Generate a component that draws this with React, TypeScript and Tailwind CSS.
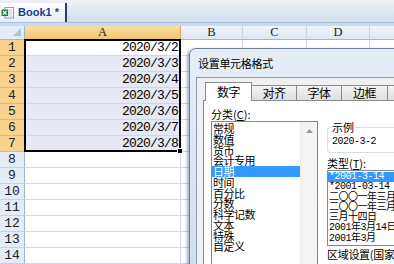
import React from 'react';

const cols = [
  { label: 'A', w: 'w-[156px]' },
  { label: 'B', w: 'w-[62px]' },
  { label: 'C', w: 'w-[64px]' },
  { label: 'D', w: 'w-[63px]' },
  { label: 'E', w: 'w-[60px]' },
];

const rows = [1, 2, 3, 4, 5, 6, 7, 8, 9, 10, 11, 12, 13, 14];

const categories = ['常规', '数值', '货币', '会计专用', '日期', '时间', '百分比', '分数', '科学记数', '文本', '特殊', '自定义'];

const types = ['*2001-3-14', '*2001-03-14', '二〇〇一年三月十四日', '二〇〇一年三月', '三月十四日', '2001年3月14日', '2001年3月'];

const tabs = [
  { label: '数字', w: 'w-[47px]' },
  { label: '对齐', w: 'w-[46px]' },
  { label: '字体', w: 'w-[46px]' },
  { label: '边框', w: 'w-[47px]' },
  { label: '图案', w: 'w-[46px]' },
];

const ExcelIcon = () => (
  <svg width="13" height="13" viewBox="0 0 13 13">
    <rect x="4" y="1.5" width="8.5" height="10.5" fill="#fff" stroke="#6f8fb5" strokeWidth="0.8" />
    <path d="M6.5 4h5M6.5 6h5M6.5 8h5M6.5 10h5" stroke="#9ab0cc" strokeWidth="0.7" />
    <rect x="0.5" y="3.5" width="6.5" height="6.5" rx="0.6" fill="#1f7a3f" />
    <path d="M2 5l3.5 3.5M5.5 5L2 8.5" stroke="#fff" strokeWidth="1.1" />
  </svg>
);

export default function App() {
  return (
    <div className="relative w-[394px] h-[264px] overflow-hidden bg-white font-['Liberation_Sans',sans-serif]">
      {/* workbook tab strip */}
      <div className="h-[22px] flex items-end bg-gradient-to-b from-[#eef1f5] to-[#d3deec]">
        <div className="h-[19px] w-[67px] flex items-center gap-[4px] pl-[1px] bg-gradient-to-b from-white to-[#e6edf7] border-r-2 border-[#2a3f63]">
          <ExcelIcon />
          <span className="text-[11px] font-bold text-[#15428b]">Book1 *</span>
        </div>
      </div>
      <div className="h-[4px] bg-[#c9d9ee] border-t border-[#a9c0df]" />

      {/* column headers */}
      <div className="flex h-[14px]">
        <div className="w-[25px] shrink-0 flex items-end justify-end pr-[3px] pb-[3px] bg-[#e4ecf7] border-r border-b border-[#9eb6ce]">
          <svg width="8" height="8" viewBox="0 0 8 8">
            <path d="M8 0L8 8L0 8Z" fill="#b3c3d8" />
          </svg>
        </div>
        {cols.map((c) => (
          <div
            key={c.label}
            className={`${c.w} shrink-0 flex items-center justify-center border-r border-b font-['Liberation_Serif',serif] text-[12.5px] leading-none text-[#222] ${
              c.label === 'A'
                ? 'bg-gradient-to-b from-[#f9dca6] to-[#f3c66c] border-r-[#d3a654] border-b-[#c9a052]'
                : 'bg-gradient-to-b from-[#f1f5fb] to-[#dde7f4] border-r-[#c7d4e5] border-b-[#9eb6ce]'
            }`}
          >
            {c.label}
          </div>
        ))}
      </div>

      {/* rows */}
      {rows.map((n) => (
        <div key={n} className="flex h-[16px]">
          <div
            className={`w-[25px] shrink-0 flex items-center justify-center border-r border-b font-['Liberation_Mono',monospace] text-[13px] leading-none text-[#222] ${
              n <= 7
                ? 'bg-[#f8d28f] border-b-[#e3b96f] border-r-[#d3a654]'
                : 'bg-[#e4ecf7] border-b-[#c5d3e6] border-r-[#9eb6ce]'
            }`}
          >
            {n}
          </div>
          {cols.map((c) => (
            <div
              key={c.label}
              className={`${c.w} shrink-0 flex items-end justify-end pr-[2px] border-r border-b border-[#d0d7e5] font-['Liberation_Mono',monospace] text-[13px] leading-[15px] tracking-[-0.8px] text-black ${
                c.label === 'A' && n >= 2 && n <= 7 ? 'bg-[#e6e9f4]' : 'bg-white'
              }`}
            >
              {c.label === 'A' && n <= 7 ? `2020/3/${n + 1}` : ''}
            </div>
          ))}
        </div>
      ))}

      {/* selection frame */}
      <div className="absolute left-[24px] top-[39px] w-[157px] h-[113px] border-2 border-black pointer-events-none">
        <div className="absolute right-[-4px] bottom-[-4px] w-[6px] h-[6px] bg-black border border-white" />
      </div>

      {/* format cells dialog */}
      <div className="absolute left-[189px] top-[48px] w-[230px] h-[230px] rounded-tl-[7px] border border-[#6d7f96] bg-gradient-to-b from-[#e6edf5] to-[#d2deec] pl-[6px] shadow-[-2px_1px_3px_rgba(70,100,150,0.5)] flex flex-col font-['Noto_Sans_CJK_SC',sans-serif]">
        <div className="h-[28px] shrink-0 flex items-center pl-[2px] text-[11px] tracking-[-0.3px] text-black">设置单元格格式</div>
        <div className="flex-1 bg-[#f0f0f0] border-l border-t border-[#8f9fb3] pl-[6px] pt-[4px]">
          <div className="flex items-end h-[18px] pl-[2px]">
            {tabs.map((t, i) =>
              i === 0 ? (
                <div
                  key={t.label}
                  className={`${t.w} relative z-10 h-[19px] -mb-px shrink-0 flex items-center justify-center bg-white border border-b-0 border-[#898c95] text-[12px] tracking-[-0.5px] text-black`}
                >
                  {t.label}
                </div>
              ) : (
                <div
                  key={t.label}
                  className={`${t.w} h-[15px] -ml-px shrink-0 flex items-center justify-center bg-gradient-to-b from-[#f4f4f4] to-[#dedede] border border-b-0 border-[#898c95] text-[12px] tracking-[-0.5px] text-black`}
                >
                  {t.label}
                </div>
              )
            )}
          </div>
          <div className="bg-white border border-[#898c95] h-[200px] pl-[7px] pt-[7px] flex gap-[9px]">
            {/* category list */}
            <div className="w-[107px] shrink-0 flex flex-col">
              <div className="h-[13px] text-[11px] leading-[13px] text-black">
                分类(<span className="underline">C</span>):
              </div>
              <div className="h-[160px] flex border border-[#828790] bg-white">
                <div className="flex-1 pt-[1px]">
                  {categories.map((c) => (
                    <div
                      key={c}
                      className={`h-[10.75px] pl-[1px] text-[11px] leading-[10.75px] tracking-[-0.5px] whitespace-nowrap ${
                        c === '日期' ? 'bg-[#3399ff] text-white' : 'text-black'
                      }`}
                    >
                      {c}
                    </div>
                  ))}
                </div>
                <div className="w-[17px] shrink-0 bg-[#f4f4f4] border-l border-[#ececec] flex flex-col">
                  <div className="h-[17px] flex items-center justify-center">
                    <svg width="7" height="4" viewBox="0 0 7 4">
                      <path d="M0 4L3.5 0L7 4Z" fill="#9a9a9a" />
                    </svg>
                  </div>
                </div>
              </div>
            </div>

            {/* sample + types */}
            <div className="w-[120px] shrink-0 flex flex-col">
              <fieldset className="mt-[14px] border border-[#d5dfe5] rounded-[3px] px-[3px] pb-[4px]">
                <legend className="px-[1px] text-[11px] leading-[11px] text-black">示例</legend>
                <div className="pt-[3px] pl-[1px] font-['Liberation_Mono',monospace] text-[10px] leading-[12px] tracking-[-0.5px] text-black">
                  2020-3-2
                </div>
              </fieldset>
              <div className="mt-[4px] text-[11px] leading-[12px] text-black">
                类型(<span className="underline">T</span>):
              </div>
              <div className="mt-[1px] border border-[#828790] bg-white pt-[1px] pb-[1px] w-[140px]">
                {types.map((t, i) => (
                  <div
                    key={t}
                    className={`h-[10.3px] pl-[1px] font-['Liberation_Mono','Noto_Sans_CJK_SC',monospace] text-[10px] leading-[10.3px] tracking-[-0.5px] whitespace-nowrap ${
                      i === 0 ? 'bg-[#3399ff] text-white' : 'text-black'
                    }`}
                  >
                    {t}
                  </div>
                ))}
              </div>
              <div className="mt-[3px] text-[11px] leading-[11px] tracking-[-0.3px] whitespace-nowrap text-black">
                区域设置(国家/地区)(<span className="underline">L</span>):
              </div>
            </div>
          </div>
        </div>
      </div>
    </div>
  );
}
